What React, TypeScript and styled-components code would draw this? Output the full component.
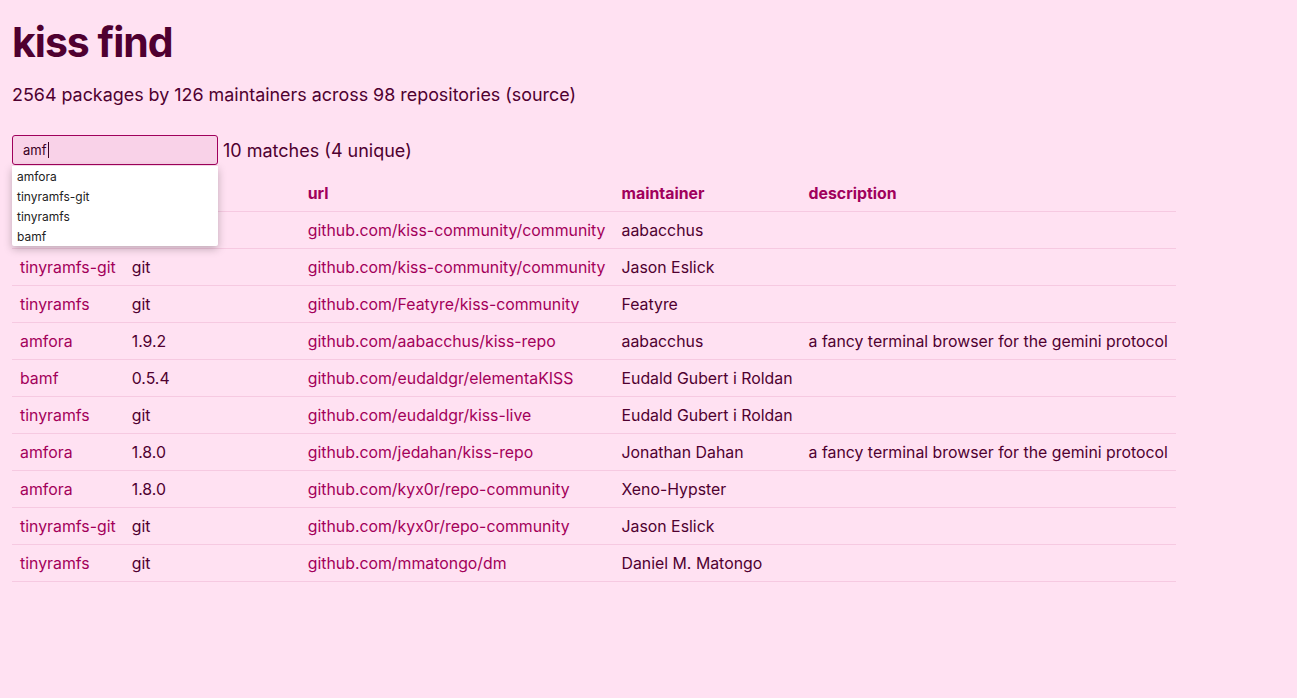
import React from "react";
import styled, { createGlobalStyle } from "styled-components";

const Global = createGlobalStyle`
  html, body { margin: 0; padding: 0; background: #ffe1f2; }
  body {
    font-family: Inter, "Liberation Sans", sans-serif;
    color: #4f0030;
  }
`;

const Page = styled.main`
  padding: 12px 12px;
`;

const Title = styled.h1`
  font-size: 41px;
  font-weight: 700;
  letter-spacing: -1px;
  margin: 0;
  line-height: 60px;
  color: #4f0030;
`;

const Subtitle = styled.p`
  font-size: 17.9px;
  margin: 11px 0 0 0;
  line-height: 24px;
`;

const Source = styled.a`
  color: inherit;
  text-decoration: none;
`;

const SearchRow = styled.div`
  display: flex;
  align-items: center;
  gap: 5px;
  margin-top: 28px;
`;

const SearchWrap = styled.div`
  position: relative;
`;

const SearchInput = styled.div`
  width: 206px;
  height: 30px;
  box-sizing: border-box;
  border: 1px solid #a0005c;
  border-radius: 3px;
  background: #f9d2e8;
  display: flex;
  align-items: center;
  padding-left: 10px;
  font-size: 13px;
  color: #3a0024;
`;

const Caret = styled.span`
  display: inline-block;
  width: 1px;
  height: 16px;
  background: #3a0024;
  margin-left: 1px;
`;

const Suggestions = styled.ul`
  position: absolute;
  top: 31px;
  left: 0;
  width: 206px;
  margin: 0;
  padding: 0;
  list-style: none;
  background: #fff;
  box-shadow: 0 3px 8px rgba(0, 0, 0, 0.25);
  border-radius: 0 0 2px 2px;
  z-index: 5;
`;

const Suggestion = styled.li`
  font-size: 12px;
  line-height: 20px;
  height: 20px;
  padding-left: 5px;
  padding-top: 1px;
  box-sizing: border-box;
  color: #222;
`;

const MatchCount = styled.span`
  font-size: 18px;
`;

const Table = styled.table`
  border-collapse: collapse;
  margin-top: 10px;
  font-size: 15.85px;
`;

const Th = styled.th<{ $w?: number }>`
  text-align: left;
  color: #a0005c;
  font-weight: 700;
  padding: 0 8px;
  height: 36px;
  border-bottom: 1px solid #f6c9e1;
  ${(p) => (p.$w ? `width: ${p.$w}px;` : "")}
`;

const Td = styled.td<{ $link?: boolean }>`
  padding: 0 8px;
  height: 36px;
  border-bottom: 1px solid #f6c9e1;
  white-space: nowrap;
  color: ${(p) => (p.$link ? "#a3005a" : "#4f0030")};
`;

const rows = [
  ["amfora", "git", "github.com/kiss-community/community", "aabacchus", ""],
  ["tinyramfs-git", "git", "github.com/kiss-community/community", "Jason Eslick", ""],
  ["tinyramfs", "git", "github.com/Featyre/kiss-community", "Featyre", ""],
  ["amfora", "1.9.2", "github.com/aabacchus/kiss-repo", "aabacchus", "a fancy terminal browser for the gemini protocol"],
  ["bamf", "0.5.4", "github.com/eudaldgr/elementaKISS", "Eudald Gubert i Roldan", ""],
  ["tinyramfs", "git", "github.com/eudaldgr/kiss-live", "Eudald Gubert i Roldan", ""],
  ["amfora", "1.8.0", "github.com/jedahan/kiss-repo", "Jonathan Dahan", "a fancy terminal browser for the gemini protocol"],
  ["amfora", "1.8.0", "github.com/kyx0r/repo-community", "Xeno-Hypster", ""],
  ["tinyramfs-git", "git", "github.com/kyx0r/repo-community", "Jason Eslick", ""],
  ["tinyramfs", "git", "github.com/mmatongo/dm", "Daniel M. Matongo", ""],
];

export default function App() {
  return (
    <>
      <Global />
      <Page>
        <Title>kiss find</Title>
        <Subtitle>
          2564 packages by 126 maintainers across 98 repositories (<Source href="#">source</Source>)
        </Subtitle>
        <SearchRow>
          <SearchWrap>
            <SearchInput>
              amf<Caret />
            </SearchInput>
            <Suggestions>
              {["amfora", "tinyramfs-git", "tinyramfs", "bamf"].map((s) => (
                <Suggestion key={s}>{s}</Suggestion>
              ))}
            </Suggestions>
          </SearchWrap>
          <MatchCount>10 matches (4 unique)</MatchCount>
        </SearchRow>
        <Table>
          <thead>
            <tr>
              <Th>name</Th>
              <Th $w={160}>version</Th>
              <Th>url</Th>
              <Th>maintainer</Th>
              <Th>description</Th>
            </tr>
          </thead>
          <tbody>
            {rows.map((r, i) => (
              <tr key={i}>
                <Td $link>{r[0]}</Td>
                <Td>{r[1]}</Td>
                <Td $link>{r[2]}</Td>
                <Td>{r[3]}</Td>
                <Td>{r[4]}</Td>
              </tr>
            ))}
          </tbody>
        </Table>
      </Page>
    </>
  );
}
